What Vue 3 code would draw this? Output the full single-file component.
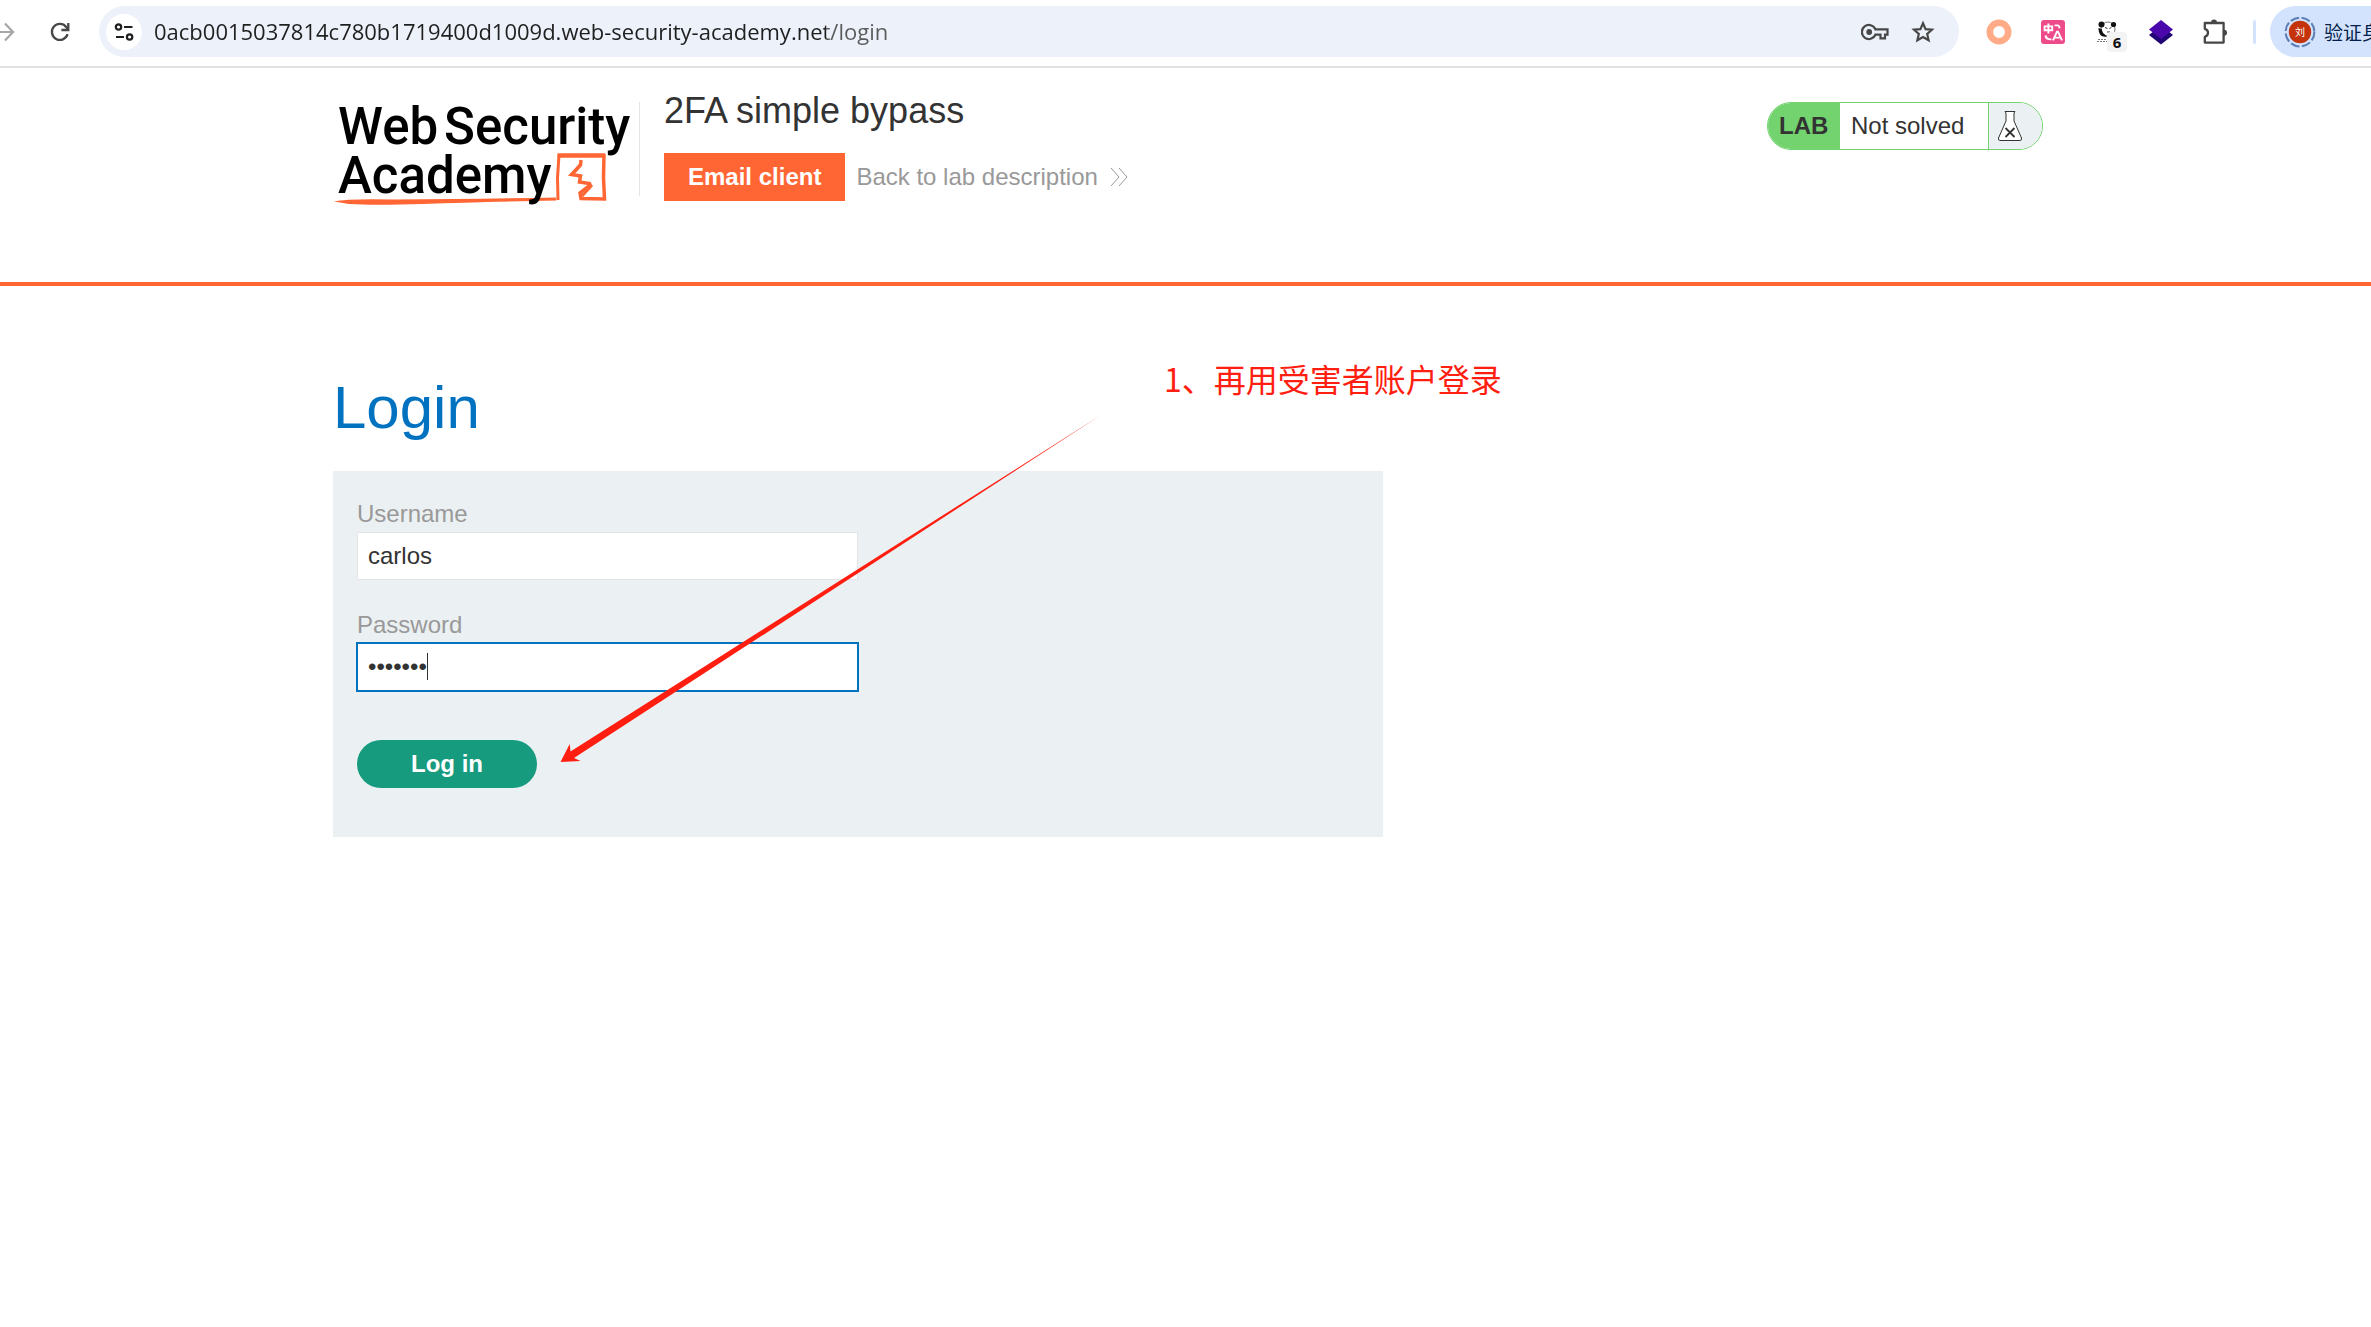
<template>
    <div class="page">
        <div class="toolbar">
            <button class="icon-btn" type="button" aria-label="Forward">
                <svg width="24" height="24" viewBox="0 0 24 24" fill="none" stroke="#a6a6a6" stroke-width="2.2">
                    <path d="M2 12H19M11 3.5L19 12L11 20.5" />
                </svg>
            </button>
            <button class="icon-btn" type="button" aria-label="Reload">
                <svg width="24" height="24" viewBox="0 0 24 24" fill="none" stroke="#474747" stroke-width="2.3">
                    <path d="M19.6 14.2A8 8 0 1 1 18.4 7.2L20 9.6" />
                    <path d="M20.3 3V10H13.4" />
                </svg>
            </button>

            <div class="omnibox">
                <button class="site-info" type="button" aria-label="View site information">
                    <svg width="20" height="20" viewBox="0 0 20 20" fill="none" stroke="#1f1f1f" stroke-width="2.2">
                        <circle cx="4.5" cy="5" r="2.7" />
                        <path d="M10 5H18.5M2 15H10" />
                        <circle cx="15.6" cy="15" r="2.7" />
                    </svg>
                </button>
                <input v-model="url" class="url" type="text" aria-label="Address" spellcheck="false">
                <button class="icon-btn" type="button" aria-label="Saved passwords">
                    <svg width="28" height="18" viewBox="0 0 28 18" fill="none" stroke="#474747" stroke-width="2.2">
                        <path d="M14.4 6.4A7 7 0 1 0 14.4 11.6H19.5V15.4H24V11.6H26.5V6.4Z" />
                        <circle cx="8.2" cy="9" r="2.9" fill="#474747" stroke="none" />
                    </svg>
                </button>
                <button class="icon-btn" type="button" aria-label="Bookmark this tab">
                    <svg width="24" height="24" viewBox="0 0 24 24" fill="none" stroke="#474747" stroke-width="2.2">
                        <path d="M12 3.2L14.6 9.1L21 9.7L16.2 14L17.6 20.3L12 17L6.4 20.3L7.8 14L3 9.7L9.4 9.1Z" />
                    </svg>
                </button>
            </div>

            <div class="extensions">
                <button class="icon-btn" type="button" aria-label="Ring">
                    <svg width="26" height="26" viewBox="0 0 26 26" fill="none">
                        <circle cx="13" cy="13" r="9.2" stroke="#ffab87" stroke-width="6.6" />
                    </svg>
                </button>
                <button class="icon-btn" type="button" aria-label="Translate">
                    <svg width="26" height="26" viewBox="0 0 26 26" fill="none" stroke="#fff" stroke-width="1.9">
                        <rect x="1" y="1" width="24" height="24" rx="3" fill="#ee4b8b" stroke="none" />
                        <path d="M4.6 7.4H12.2V11.2H4.6ZM8.4 4.4V14.4" />
                        <path d="M14.6 6.4H17.4Q19.4 6.4 19.6 9.4M5.6 16.4Q5.8 20.6 11.4 20.4" />
                        <path d="M13 21.4L17 12.6H18L22 21.4M14.6 18.6H20.4" />
                    </svg>
                </button>
                <button class="icon-btn" type="button" aria-label="Panda">
                    <svg width="24" height="24" viewBox="0 0 24 24">
                        <ellipse cx="13" cy="9" rx="7" ry="7" fill="#fff" stroke="#777" />
                        <circle cx="6.5" cy="4.5" r="3" fill="#111" />
                        <circle cx="18.5" cy="4.5" r="2.6" fill="#111" />
                        <path d="M3.4 8Q3.6 18 12 16.6L8 13L6.6 9Z" fill="#111" />
                        <path d="M10 7.5L12.4 8.5M16.4 7.5L14.4 8.5M12 12H15" stroke="#333" fill="none" />
                        <path d="M3 19.5H14M2 21.5H12" stroke="#777" stroke-dasharray="2 1" />
                    </svg>
                    <span class="count">6</span>
                </button>
                <button class="icon-btn" type="button" aria-label="Layers">
                    <svg width="26" height="26" viewBox="0 0 26 26">
                        <path d="M1 16L6 12H20L25 16L13 25.4Z" fill="#220575" />
                        <path d="M13 1L25 10.5L13 20L1 10.5Z" fill="#4a07ab" />
                    </svg>
                </button>
                <button class="icon-btn" type="button" aria-label="Extensions">
                    <svg width="28" height="28" viewBox="0 0 28 28" fill="none" stroke="#474747" stroke-width="2.3" stroke-linejoin="round">
                        <path d="M3.8 5H22.6V24.6H3.8V18.8Q7 18 7 14.8Q7 11.6 3.8 10.8Z" />
                        <path d="M10 4.6A3 3 0 0 1 16 4.6ZM23 11.8A3 3 0 0 1 23 17.8Z" fill="#474747" stroke="none" />
                    </svg>
                </button>
            </div>
            <span class="separator"></span>
            <button class="profile" type="button">
                <svg width="32" height="32" viewBox="0 0 32 32">
                    <circle cx="16" cy="16" r="14.4" fill="none" stroke="#5b7db5" stroke-width="2" stroke-dasharray="9 2.5" />
                    <circle cx="16" cy="16" r="11.2" fill="#c5330d" />
                    <text x="16" y="20" text-anchor="middle" font-size="10" fill="#fff">刘</text>
                </svg>
                验证身份
            </button>
        </div>

        <header class="lab-header">
            <div class="container header-row">
                <a class="logo" href="#" aria-label="Web Security Academy">
                    <svg class="logo-sketch" width="300" height="104" viewBox="0 0 300 104" fill="none">
                        <path d="M1 99.500Q14 96.500 60 97.500Q150 97 223 95.500L223.500 98.500Q150 100 90 102Q40 103.500 16 102Z" fill="#ff6633" />
                        <path d="M225 98L224.500 76L226 53" stroke="#ff6633" stroke-width="3" />
                        <path d="M224.500 53.500H272" stroke="#ff6633" stroke-width="4.500" />
                        <path d="M271 52L270.500 76L271.500 97L248 96.500L247 91L257 83L256.500 81.500L246.500 80L247.500 74L238.500 72.500L247.500 63L248 58" stroke="#ff6633" stroke-width="3.500" />
                        <path d="M239 73L248 62M249 94L259 83" stroke="#ff6633" stroke-width="3" />
                    </svg>
                    <span class="logo-line"><span>Web</span><span>Security</span></span>
                    <span class="logo-line">Academy</span>
                </a>
                <div class="title-block">
                    <h2>2FA simple bypass</h2>
                    <div class="links">
                        <a class="email-client" href="#">Email client</a>
                        <a class="back-link" href="#">
                            Back to lab description
                            <svg width="18" height="20" viewBox="0 0 18 20" fill="none" stroke="#999">
                                <path d="M1 1L9 10L1 19M9 1L17 10L9 19" />
                            </svg>
                        </a>
                    </div>
                </div>
                <div class="lab-status">
                    <span class="lab-tag">LAB</span>
                    <span class="lab-state">Not solved</span>
                    <span class="lab-flask">
                        <svg width="26" height="32" viewBox="0 0 26 32" fill="#fff" stroke="#333">
                            <path d="M8 1.500H18L17 3V11L24.500 28Q25 30.500 23 30.500H3Q1 30.500 1.500 28L9 11V3Z" />
                            <path d="M8.500 18L17.500 27M17.500 18L8.500 27" stroke-width="1.800" />
                        </svg>
                    </span>
                </div>
            </div>
        </header>

        <main class="container">
            <h1>Login</h1>
            <form class="login-form" @submit.prevent>
                <label for="username">Username</label>
                <input id="username" v-model="username" type="text" autocomplete="off">
                <label for="password">Password</label>
                <div class="password-field">
                    <input id="password" v-model="password" type="password" autocomplete="off">
                    <span class="caret"></span>
                </div>
                <button class="login-btn" type="submit">Log in</button>
            </form>

            <div class="note">
                <p>1、再用受害者账户登录</p>
                <svg width="542" height="350" viewBox="0 0 542 350">
                    <path d="M0.500 347L9.700 329L10.500 336.500L541 0L14 343L20.500 346Z" fill="#ff1e10" />
                </svg>
            </div>
        </main>
    </div>
</template>

<script setup>
import { ref } from 'vue';

const url = ref('0acb0015037814c780b1719400d1009d.web-security-academy.net/login');
const username = ref('carlos');
const password = ref('montoya');
</script>

<style>
body {
    margin: 0;
    background: #fff;
}
</style>

<style scoped>
.page {
    min-height: 100vh;
    overflow: hidden;
    font-family: "Liberation Sans", Arial, "Noto Sans CJK SC", sans-serif;
    font-size: 24px;
    color: #333;
}

.page * {
    box-sizing: border-box;
}

button,
input {
    font-family: inherit;
    font-size: inherit;
    border: 0;
    padding: 0;
    outline: none;
}

a {
    text-decoration: none;
}

svg {
    display: block;
    flex: none;
}

.toolbar {
    display: flex;
    align-items: center;
    height: 68px;
    margin-left: -12px;
    padding-bottom: 3px;
    border-bottom: 2px solid #e1e1e1;
}

.icon-btn {
    position: relative;
    display: flex;
    align-items: center;
    justify-content: center;
    flex: none;
    width: 36px;
    height: 36px;
    background: none;
}

.toolbar > .icon-btn + .icon-btn {
    margin-left: 18px;
}

.omnibox {
    display: flex;
    align-items: center;
    gap: 12px;
    flex: 1;
    height: 51px;
    margin: 0 22px 0 21px;
    padding: 0 18px 0 7px;
    border-radius: 26px;
    background: #ecf1fa;
}

.site-info {
    display: flex;
    align-items: center;
    justify-content: center;
    flex: none;
    width: 36px;
    height: 36px;
    border-radius: 50%;
    background: #fff;
}

.url {
    flex: 1;
    min-width: 0;
    height: 36px;
    padding-bottom: 2px;
    font-family: "Open Sans", sans-serif;
    font-size: 22px;
    color: transparent;
    background: linear-gradient(90deg, #1f1f1f 672px, #5a5a5a 672px);
    background-clip: text;
}

.extensions {
    display: flex;
    gap: 18px;
}

.count {
    position: absolute;
    left: 18px;
    top: 18px;
    width: 20px;
    height: 20px;
    border-radius: 4px;
    background: #f3f3f3;
    font: bold 15px/20px "Noto Sans", sans-serif;
    color: #111;
}

.separator {
    width: 3px;
    height: 24px;
    margin: 0 14px 0 20px;
    border-radius: 2px;
    background: #d3e3fd;
}

.profile {
    display: flex;
    align-items: center;
    gap: 8px;
    flex: none;
    width: 160px;
    height: 51px;
    margin-right: -59px;
    padding-left: 14px;
    border-radius: 26px;
    background: #d3e3fd;
    font-family: "Noto Sans CJK SC", sans-serif;
    font-size: 19px;
    color: #041e49;
    white-space: nowrap;
}

.container {
    position: relative;
    max-width: 1715px;
    margin: 0 auto;
    padding-left: 5px;
    box-sizing: border-box;
}

.lab-header {
    height: 218px;
    border-bottom: 4px solid #ff6633;
}

.header-row {
    display: flex;
    align-items: flex-start;
    padding-top: 22px;
}

.logo {
    position: relative;
    width: 307px;
    height: 94px;
    margin-top: 12px;
    border-right: 1px solid #e5e5e5;
    font-family: Roboto, sans-serif;
    font-size: 51px;
    font-weight: 500;
    line-height: 49px;
    color: #000;
}

.logo-line {
    position: relative;
    display: flex;
    gap: 6px;
    padding-left: 5px;
}

.logo-sketch {
    position: absolute;
    left: 0;
    top: 0;
}

.title-block {
    flex: 1;
    padding-left: 24px;
}

h2 {
    margin: 0 0 21px;
    font-size: 36px;
    font-weight: normal;
    line-height: 42px;
}

.links {
    display: flex;
    align-items: center;
    gap: 11px;
}

.email-client {
    padding: 0 24px;
    background: #ff6633;
    font-weight: bold;
    line-height: 48px;
    color: #fff;
}

.back-link {
    display: flex;
    align-items: center;
    gap: 12px;
    line-height: 48px;
    color: #999;
}

.lab-status {
    display: flex;
    width: 276px;
    height: 48px;
    margin-top: 12px;
    border: 1px solid #72d36f;
    border-radius: 24px;
    overflow: hidden;
    line-height: 46px;
}

.lab-tag {
    width: 72px;
    padding-left: 11px;
    background: #72d36f;
    font-weight: bold;
}

.lab-state {
    flex: 1;
    padding-left: 11px;
}

.lab-flask {
    display: flex;
    align-items: center;
    width: 54px;
    padding-left: 8px;
    border-left: 1px solid #72d36f;
    background: #ebf0f2;
}

h1 {
    margin: 0;
    padding: 87px 0 29px;
    font-size: 60px;
    font-weight: normal;
    line-height: 69px;
    color: #0072c0;
}

.login-form {
    max-width: 1050px;
    padding: 24px 24px 49px;
    background: #ebf0f2;
}

.login-form label {
    display: block;
    line-height: 37px;
    color: #999;
}

.login-form input {
    display: block;
    width: 501px;
    max-width: 100%;
    height: 48px;
    padding: 0 10px;
    border: 1px solid #e4e4e4;
    background: #fff;
    color: #333;
}

#username {
    margin-bottom: 26px;
}

.password-field {
    position: relative;
    margin-bottom: 49px;
}

#password {
    border-color: #0072c0;
    box-shadow: 0 0 0 1px #0072c0;
}

.caret {
    position: absolute;
    left: 70px;
    top: 10px;
    width: 1px;
    height: 27px;
    background: #333;
}

.login-btn {
    display: block;
    width: 180px;
    height: 48px;
    border-radius: 24px;
    background: #179b7f;
    font-weight: bold;
    color: #fff;
}

/* callout drawn over the page */
.note {
    position: absolute;
    left: 232px;
    top: 68px;
    color: #ff1e10;
    pointer-events: none;
}

.note p {
    margin: 0 0 13px 604px;
    font-family: "Noto Sans CJK SC", sans-serif;
    font-size: 32px;
    line-height: 48px;
    white-space: nowrap;
}
</style>
